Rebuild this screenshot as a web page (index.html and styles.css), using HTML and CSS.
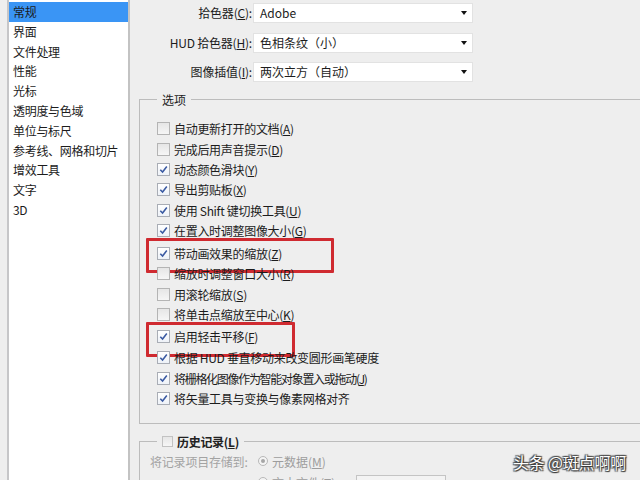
FILE: index.html
```html
<!DOCTYPE html>
<html lang="zh">
<head>
<meta charset="utf-8">
<link rel="stylesheet" href="styles.css">
</head>
<body>
<div class="app">
  <ul class="sidebar">
    <li class="item selected">常规</li>
    <li class="item">界面</li>
    <li class="item">文件处理</li>
    <li class="item">性能</li>
    <li class="item">光标</li>
    <li class="item">透明度与色域</li>
    <li class="item">单位与标尺</li>
    <li class="item">参考线、网格和切片</li>
    <li class="item">增效工具</li>
    <li class="item">文字</li>
    <li class="item">3D</li>
  </ul>
  <main class="main">
    <div class="form">
      <label class="flabel">拾色器(<u>C</u>):</label>
      <div class="select"><span>Adobe</span><i class="arrow"></i></div>
      <label class="flabel">HUD 拾色器(<u>H</u>):</label>
      <div class="select"><span>色相条纹（小）</span><i class="arrow"></i></div>
      <label class="flabel">图像插值(<u>I</u>):</label>
      <div class="select"><span>两次立方（自动）</span><i class="arrow"></i></div>
    </div>

    <fieldset class="group options">
      <legend class="legend">选项</legend>
      <ul class="checks">
        <li class="row"><span class="cb"></span>自动更新打开的文档(<u>A</u>)</li>
        <li class="row"><span class="cb"></span>完成后用声音提示(<u>D</u>)</li>
        <li class="row"><span class="cb on"><svg viewBox="0 0 12 12"><path d="M2.5 6.2 L5 8.8 L9.6 2.8"/></svg></span>动态颜色滑块(<u>Y</u>)</li>
        <li class="row"><span class="cb on"><svg viewBox="0 0 12 12"><path d="M2.5 6.2 L5 8.8 L9.6 2.8"/></svg></span>导出剪贴板(<u>X</u>)</li>
        <li class="row"><span class="cb on"><svg viewBox="0 0 12 12"><path d="M2.5 6.2 L5 8.8 L9.6 2.8"/></svg></span>使用 Shift 键切换工具(<u>U</u>)</li>
        <li class="row"><span class="cb on"><svg viewBox="0 0 12 12"><path d="M2.5 6.2 L5 8.8 L9.6 2.8"/></svg></span>在置入时调整图像大小(<u>G</u>)</li>
        <li class="row hl hl1"><span class="cb on"><svg viewBox="0 0 12 12"><path d="M2.5 6.2 L5 8.8 L9.6 2.8"/></svg></span>带动画效果的缩放(<u>Z</u>)</li>
        <li class="row"><span class="cb"></span>缩放时调整窗口大小(<u>R</u>)</li>
        <li class="row"><span class="cb"></span>用滚轮缩放(<u>S</u>)</li>
        <li class="row"><span class="cb"></span>将单击点缩放至中心(<u>K</u>)</li>
        <li class="row hl hl2"><span class="cb on"><svg viewBox="0 0 12 12"><path d="M2.5 6.2 L5 8.8 L9.6 2.8"/></svg></span>启用轻击平移(<u>F</u>)</li>
        <li class="row"><span class="cb on"><svg viewBox="0 0 12 12"><path d="M2.5 6.2 L5 8.8 L9.6 2.8"/></svg></span>根据 HUD 垂直移动来改变圆形画笔硬度</li>
        <li class="row"><span class="cb on"><svg viewBox="0 0 12 12"><path d="M2.5 6.2 L5 8.8 L9.6 2.8"/></svg></span><span class="narrow">将栅格化图像作为智能对象置入或拖动(<u>J</u>)</span></li>
        <li class="row"><span class="cb on"><svg viewBox="0 0 12 12"><path d="M2.5 6.2 L5 8.8 L9.6 2.8"/></svg></span>将矢量工具与变换与像素网格对齐</li>
      </ul>
    </fieldset>

    <fieldset class="group history">
      <legend class="legend hlegend"><span class="cb dis"></span><b>历史记录(<u>L</u>)</b></legend>
      <div class="hrow">
        <span class="hlabel">将记录项目存储到:</span>
        <span class="radio"><i></i></span><span class="dim">元数据(<u>M</u>)</span>
      </div>
      <div class="hrow">
        <span class="hlabel"></span>
        <span class="radio empty"></span><span class="dim tfile">文本文件(<u>T</u>)</span>
        <span class="btn">选取(<u>O</u>)...</span>
      </div>
    </fieldset>
  </main>
</div>
<div class="watermark">头条 @斑点啊啊</div>
</body>
</html>
```

FILE: styles.css
```css
* { box-sizing: border-box; }
html, body {
  margin: 0;
  padding: 0;
  width: 640px;
  height: 480px;
  overflow: hidden;
  background: #eeeeee;
  font-family: "Noto Sans CJK SC", "Noto Sans", sans-serif;
  font-size: 12px;
  color: #1c1c1c;
}
u { text-decoration: underline; text-underline-offset: 1px; }

.app {
  display: flex;
  height: 480px;
}

.sidebar {
  list-style: none;
  margin: 0 0 0 7px;
  padding: 2px 0 0 0;
  width: 123px;
  height: 520px;
  background: #ffffff;
  border-left: 2px solid #c6c6c8;
  border-right: 2px solid #c3c3c3;
  flex: none;
}
.item {
  height: 19.8px;
  line-height: 19.8px;
  padding-left: 4px;
  white-space: nowrap;
  letter-spacing: -0.3px;
}
.item.selected {
  background: #3a95f5;
}

.main {
  flex: 1;
  min-width: 0;
  padding-left: 9px;
}

.form {
  display: grid;
  grid-template-columns: 113px 220px;
  column-gap: 1px;
  row-gap: 9.5px;
  padding-top: 3px;
}
.flabel {
  text-align: right;
  line-height: 20px;
  white-space: nowrap;
  letter-spacing: -0.2px;
}
.select {
  height: 20px;
  background: #ffffff;
  border: 1px solid #e2e2e2;
  display: flex;
  align-items: center;
  justify-content: space-between;
  padding: 0 5px 0 6px;
  line-height: 18px;
}
.arrow {
  width: 0;
  height: 0;
  border-left: 3.5px solid transparent;
  border-right: 3.5px solid transparent;
  border-top: 4px solid #111;
}

.group {
  margin: 0;
  width: 520px;
  min-inline-size: 0;
  border: 1px solid #bcbcbc;
}
.options {
  margin-top: 8.5px;
  padding: 0 0 14px 17px;
}
.legend {
  padding: 0 5px;
  line-height: 17px;
  height: 17px;
}
.checks {
  list-style: none;
  margin: 0;
  padding: 11px 0 0 0;
}
.row {
  display: flex;
  align-items: center;
  height: 20.4px;
  white-space: nowrap;
  letter-spacing: -0.3px;
  position: relative;
}
.row.hl { margin: 2px 0 0.4px; }
.row.hl::after {
  content: "";
  position: absolute;
  border: 3px solid #cf2a30;
  border-radius: 1px;
  left: -11px;
  top: -5px;
  height: 29px;
}
.hl1::after { width: 182px; }
.hl2::after { width: 143px; top: -7px; height: 30px; }
.narrow { letter-spacing: -1.3px; }

.cb {
  width: 13px;
  height: 13px;
  flex: none;
  border: 1px solid #b4b4b4;
  background: linear-gradient(#e6e6e6, #f6f6f6);
  margin-right: 4px;
  display: inline-flex;
}
.cb.on {
  background: linear-gradient(#ffffff, #eef2f8);
  border-color: #a9adb5;
}
.cb svg {
  width: 11px;
  height: 11px;
  fill: none;
  stroke: #3b5aa2;
  stroke-width: 1.7;
}

.history {
  margin-top: 9px;
  padding: 0 0 0 10px;
}
.hlegend {
  margin-left: 7px;
  display: flex;
  align-items: center;
}
.hlegend .cb {
  width: 11px;
  height: 11px;
  border-color: #c2c2c2;
  margin-right: 4px;
}
.hlegend b {
  font-weight: 700;
  color: #222;
  letter-spacing: -0.3px;
}
.hrow {
  display: flex;
  align-items: center;
  height: 19px;
  margin-top: 2px;
  white-space: nowrap;
}
.hlabel {
  width: 108px;
  color: #a3a3a3;
  letter-spacing: -0.2px;
  flex: none;
}
.radio {
  width: 10px;
  height: 10px;
  border: 1px solid #b8b8b8;
  border-radius: 50%;
  display: inline-flex;
  align-items: center;
  justify-content: center;
  margin-right: 4px;
  background: #f4f4f4;
}
.radio i {
  width: 4px;
  height: 4px;
  border-radius: 50%;
  background: #a6a6a6;
}
.dim { color: #9d9d9d; }
.tfile { width: 84px; }
.btn {
  width: 90px;
  height: 22px;
  margin-top: 8px;
  border: 1px solid #c4c4c4;
  background: #f3f3f3;
  text-align: center;
  line-height: 20px;
  color: #9d9d9d;
}

.watermark {
  position: absolute;
  right: 14px;
  top: 450px;
  font-size: 16px;
  color: #ffffff;
  letter-spacing: -0.2px;
  text-shadow: 0 0 1px #333, 1px 1px 1px #333, -1px -1px 1px #555, 1px -1px 1px #555, -1px 1px 1px #555;
}
```
